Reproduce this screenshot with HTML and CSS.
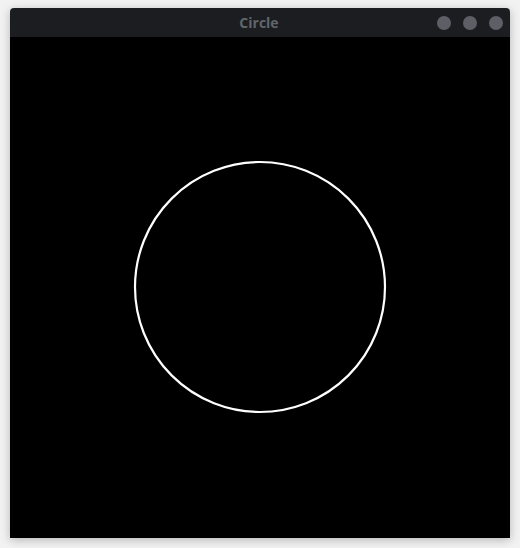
FILE: index.html
```html
<!DOCTYPE html>
<html>
<head>
<meta charset="utf-8">
<link rel="stylesheet" href="styles.css">
</head>
<body>
<div class="window">
  <div class="titlebar">
    <span class="title">Circle</span>
    <div class="controls">
      <span class="btn"></span>
      <span class="btn"></span>
      <span class="btn"></span>
    </div>
  </div>
  <div class="canvas">
    <svg width="500" height="501" viewBox="0 0 500 501">
      <circle cx="250" cy="250" r="125" fill="none" stroke="#ffffff" stroke-width="2.2"/>
    </svg>
  </div>
</div>
</body>
</html>
```
FILE: styles.css
```css
html, body {
  margin: 0;
  padding: 0;
}
body {
  background: #f2f2f2;
  width: 520px;
  height: 548px;
  padding: 8px 10px 0 10px;
  box-sizing: border-box;
}
.window {
  width: 500px;
  height: 530px;
  display: flex;
  flex-direction: column;
  border-radius: 4px 4px 0 0;
  overflow: hidden;
  box-shadow: 0 2px 10px rgba(0,0,0,0.25);
}
.titlebar {
  height: 29px;
  background: #1b1d20;
  position: relative;
  display: flex;
  align-items: center;
  justify-content: center;
}
.title {
  font-family: "Open Sans", "DejaVu Sans", sans-serif;
  font-weight: bold;
  font-size: 14px;
  color: #61666b;
  margin-left: -2px;
}
.controls {
  position: absolute;
  right: 7px;
  top: 8px;
  display: flex;
  gap: 12px;
}
.btn {
  width: 14px;
  height: 14px;
  border-radius: 50%;
  background: #5e5e66;
}
.canvas {
  flex: 1;
  background: #000;
}
.canvas svg {
  display: block;
}
```
